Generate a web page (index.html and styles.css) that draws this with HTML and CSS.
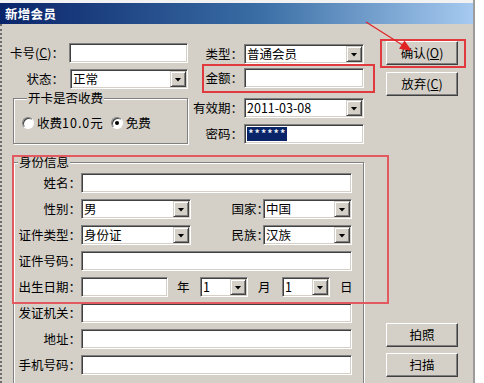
FILE: index.html
```html
<!DOCTYPE html>
<html lang="zh-CN">
<head>
<meta charset="utf-8">
<title>新增会员</title>
<link rel="stylesheet" href="styles.css">
</head>
<body>
<div class="window">
  <div class="titlebar"><span class="title">新增会员</span></div>
  <div class="client">
    <div class="form">
      <div class="top">
        <div class="col-left">
          <div class="row r-card">
            <span class="lbl lbl-card">卡号(<u>C</u>)：</span>
            <div class="field w-card"></div>
          </div>
          <div class="row r-state">
            <span class="lbl lbl-state">状态：</span>
            <div class="field combo w-state"><span class="val">正常</span><span class="drop"><i class="tri"></i></span></div>
          </div>
          <fieldset class="group fee">
            <legend>开卡是否收费</legend>
            <div class="radios">
              <span class="radio"></span><span class="rtext">收费<span class="num">10.0</span>元</span>
              <span class="radio checked"></span><span class="rtext">免费</span>
            </div>
          </fieldset>
        </div>
        <div class="col-right">
          <div class="row ra">
            <span class="lbl lbl-r">类型：</span>
            <div class="field combo w-r"><span class="val">普通会员</span><span class="drop"><i class="tri"></i></span></div>
          </div>
          <div class="row rb">
            <span class="lbl lbl-r">金额：</span>
            <div class="field w-r"></div>
          </div>
          <div class="row rc">
            <span class="lbl lbl-r">有效期：</span>
            <div class="field combo w-r"><span class="val">2011-03-08</span><span class="drop"><i class="tri"></i></span></div>
          </div>
          <div class="row rd">
            <span class="lbl lbl-r">密码：</span>
            <div class="field w-r"><span class="sel">******</span></div>
          </div>
        </div>
      </div>
      <fieldset class="group idinfo">
        <legend>身份信息</legend>
        <div class="row irow">
          <span class="lbl lbl-id">姓名：</span>
          <div class="field w-full"></div>
        </div>
        <div class="row irow">
          <span class="lbl lbl-id">性别：</span>
          <div class="field combo w-half"><span class="val">男</span><span class="drop"><i class="tri"></i></span></div>
          <span class="lbl lbl-mid">国家<span class="colon">：</span></span>
          <div class="field combo w-right"><span class="val">中国</span><span class="drop"><i class="tri"></i></span></div>
        </div>
        <div class="row irow">
          <span class="lbl lbl-id">证件类型：</span>
          <div class="field combo w-half"><span class="val">身份证</span><span class="drop"><i class="tri"></i></span></div>
          <span class="lbl lbl-mid">民族<span class="colon">：</span></span>
          <div class="field combo w-right"><span class="val">汉族</span><span class="drop"><i class="tri"></i></span></div>
        </div>
        <div class="row irow">
          <span class="lbl lbl-id">证件号码：</span>
          <div class="field w-full"></div>
        </div>
        <div class="row irow">
          <span class="lbl lbl-id">出生日期：</span>
          <div class="field w-birth"></div>
          <span class="unit u-year">年</span>
          <div class="field combo w-small"><span class="val">1</span><span class="drop"><i class="tri"></i></span></div>
          <span class="unit u-month">月</span>
          <div class="field combo w-small"><span class="val">1</span><span class="drop"><i class="tri"></i></span></div>
          <span class="unit u-day">日</span>
        </div>
        <div class="row irow">
          <span class="lbl lbl-id">发证机关：</span>
          <div class="field w-full"></div>
        </div>
        <div class="row irow">
          <span class="lbl lbl-id">地址：</span>
          <div class="field w-full"></div>
        </div>
        <div class="row irow">
          <span class="lbl lbl-id">手机号码：</span>
          <div class="field w-full"></div>
        </div>
      </fieldset>
    </div>
    <div class="side">
      <div class="btn">确认(<u>O</u>)</div>
      <div class="btn b-cancel">放弃(<u>C</u>)</div>
      <div class="btn b-photo">拍照</div>
      <div class="btn b-scan">扫描</div>
    </div>
  </div>

  <div class="mark mark-ok"></div>
  <div class="mark mark-amount"></div>
  <div class="mark mark-id"></div>
  <svg class="arrow" width="484" height="383" viewBox="0 0 484 383">
    <line x1="366" y1="22" x2="404" y2="46" stroke="#e02424" stroke-width="1.2"/>
    <polygon points="412,51 399,48.8 404.5,40.4" fill="#e02424"/>
  </svg>
</div>
</body>
</html>
```

FILE: styles.css
```css
html, body {
  margin: 0;
  padding: 0;
  background: #ffffff;
}

body {
  font-family: "Noto Sans CJK SC", "Noto Sans", sans-serif;
  font-size: 12.5px;
  color: #000;
  line-height: 14px;
}

u { text-decoration: underline; }

.window {
  position: relative;
  width: 475px;
  height: 383px;
  box-sizing: border-box;
  padding-top: 3px;
  border-right: 2px solid #9c9c9c;
  background: #f2f2f2;
  overflow: hidden;
}

.titlebar {
  height: 21px;
  background: linear-gradient(to right, #0a246a 0%, #3a6ea5 55%, #a6caf0 100%);
  display: flex;
  align-items: center;
  padding-left: 5px;
}

.title {
  color: #fff;
  font-weight: bold;
  letter-spacing: 0.3px;
}

.client {
  display: flex;
  height: 359px;
  box-sizing: border-box;
  background: #d4d0c8;
  border-left: 2px dotted #6c6c6c;
  padding: 17px 0 0 6px;
}

.form {
  width: 356px;
  padding-top: 2px;
}

.top {
  display: flex;
}

.col-left { width: 182px; }
.col-right { width: 174px; }

.row {
  display: flex;
  align-items: center;
  height: 20px;
}

.lbl {
  white-space: nowrap;
  text-align: right;
  box-sizing: border-box;
}

.lbl-card { width: 61px; padding-right: 5px; }
.lbl-state { width: 62px; padding-right: 6px; }
.lbl-r { width: 54px; padding-right: 1px; }
.lbl-id { width: 67px; }
.lbl-mid { width: 72px; }
.colon { letter-spacing: -6px; }

.r-state { margin-top: 6px; }
.ra { margin-top: 1px; }
.rb { margin-top: 4px; }
.rc { margin-top: 10px; }
.rd { margin-top: 6px; }

.field {
  height: 20px;
  box-sizing: border-box;
  background: #fff;
  border: 1px solid;
  border-color: #808080 #ffffff #ffffff #808080;
  box-shadow: inset 1px 1px 0 #404040, inset -1px -1px 0 #d4d0c8;
  display: flex;
  align-items: center;
  padding-left: 2px;
  white-space: nowrap;
  overflow: hidden;
}

.combo { padding-right: 1px; }
.combo .val { flex: 1; }

.drop {
  width: 16px;
  height: 16px;
  box-sizing: border-box;
  background: #d4d0c8;
  border: 1px solid;
  border-color: #d4d0c8 #404040 #404040 #d4d0c8;
  box-shadow: inset 1px 1px 0 #fff, inset -1px -1px 0 #808080;
  display: flex;
  align-items: center;
  justify-content: center;
}

.tri {
  display: block;
  width: 7px;
  height: 4px;
  background: #000;
  clip-path: polygon(0 0, 100% 0, 50% 100%);
  margin-top: 1px;
}

.w-card { width: 119px; }
.w-state { width: 118px; }
.w-r { width: 120px; }
.w-full { width: 271px; }
.w-half { width: 110px; }
.w-right { width: 89px; }
.w-birth { width: 87px; }
.w-small { width: 48px; }

.sel {
  background: #0a246a;
  color: #fff;
  padding: 0 1px;
  letter-spacing: 0.5px;
}

.group {
  margin: 0;
  border: 1px solid #808080;
  box-shadow: 1px 1px 0 #fff, inset 1px 1px 0 #fff;
  min-inline-size: 0;
}

.group legend {
  padding: 0 1px;
  background: #d4d0c8;
  line-height: 14px;
}

.fee {
  margin: 2px 0 0 5px;
  width: 175px;
  box-sizing: border-box;
  padding: 11px 0 13px 8px;
}

.fee legend { margin-left: 5px; }

.radios {
  display: flex;
  align-items: center;
  height: 14px;
}

.radio {
  width: 12px;
  height: 12px;
  box-sizing: border-box;
  border-radius: 50%;
  background: #fff;
  border: 1px solid;
  border-color: #808080 #ffffff #ffffff #808080;
  box-shadow: inset 1px 1px 0 #404040;
  display: flex;
  align-items: center;
  justify-content: center;
}

.radio.checked::after {
  content: "";
  width: 4px;
  height: 4px;
  border-radius: 50%;
  background: #000;
}

.rtext { margin-left: 3px; margin-right: 8px; }
.num { letter-spacing: 1px; }

.idinfo {
  margin: 11px 0 0 5px;
  width: 351px;
  box-sizing: border-box;
  padding: 4px 0 40px 0;
}

.idinfo legend { margin-left: 4px; }

.irow + .irow { margin-top: 6px; }

.unit { white-space: nowrap; box-sizing: border-box; }
.u-year { width: 32px; padding-left: 9px; }
.u-month { width: 34px; padding-left: 10px; }
.u-day { padding-left: 10px; }

.side {
  margin-left: 22px;
  display: flex;
  flex-direction: column;
}

.btn {
  width: 72px;
  height: 24px;
  box-sizing: border-box;
  background: #d4d0c8;
  border: 1px solid;
  border-color: #ffffff #404040 #404040 #ffffff;
  box-shadow: inset -1px -1px 0 #808080;
  display: flex;
  align-items: center;
  justify-content: center;
  white-space: nowrap;
}

.b-cancel { margin-top: 7px; }
.b-photo { margin-top: 227px; }
.b-scan { margin-top: 6px; }

.mark {
  position: absolute;
  box-sizing: border-box;
  border: 2px solid #e03a3e;
  pointer-events: none;
}

.mark-ok { left: 380px; top: 39px; width: 86px; height: 29px; }
.mark-amount { left: 202px; top: 64px; width: 173px; height: 29px; }
.mark-id { left: 12px; top: 155px; width: 377px; height: 149px; border-color: #e25a60; }

.arrow {
  position: absolute;
  left: 0;
  top: 0;
  pointer-events: none;
}
```
